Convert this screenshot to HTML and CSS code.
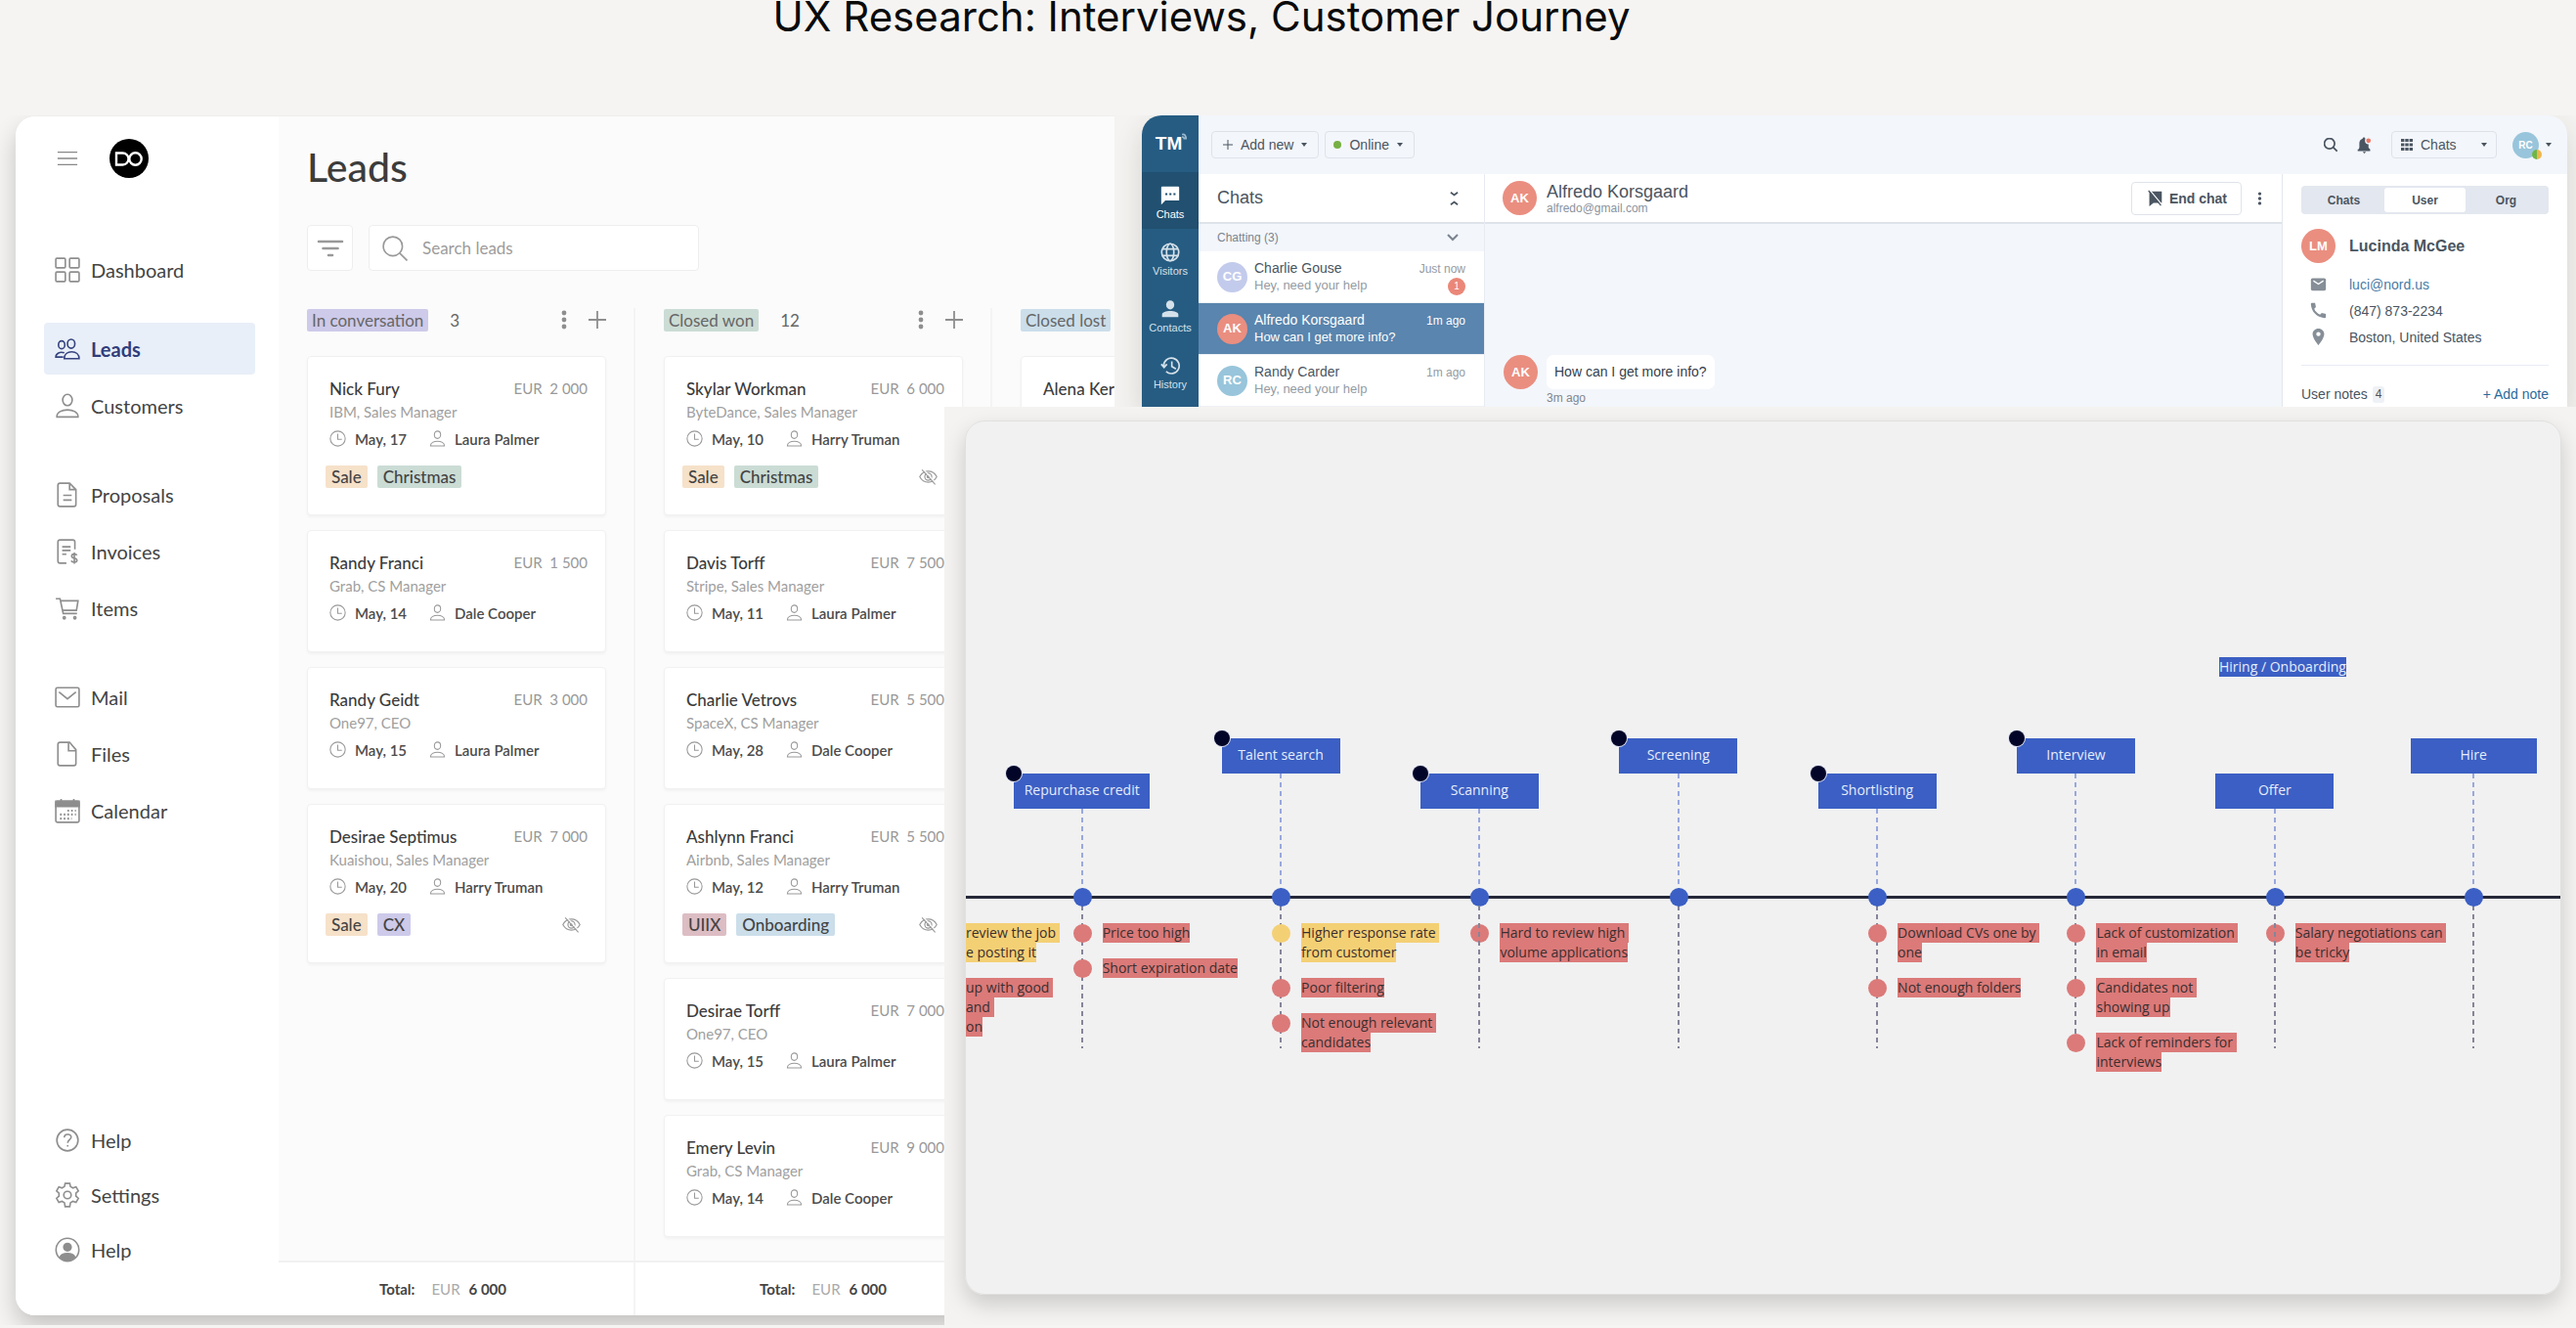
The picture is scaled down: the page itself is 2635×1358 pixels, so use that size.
FILE: index.html
```html
<!DOCTYPE html>
<html lang="en">
<head>
<meta charset="utf-8">
<title>UX Research</title>
<link rel="stylesheet" href="styles.css">
</head>
<body>
<svg class="sprite" aria-hidden="true">
  <symbol id="menu" viewBox="0 0 24 24"><path d="M1 5h22M1 12h22M1 19h22"/></symbol>
  <symbol id="grid" viewBox="0 0 24 24"><rect x="1" y="1" width="9" height="9" rx="1"/><rect x="14" y="1" width="9" height="9" rx="1"/><rect x="1" y="14" width="9" height="9" rx="1"/><rect x="14" y="14" width="9" height="9" rx="1"/></symbol>
  <symbol id="people" viewBox="0 0 24 24"><ellipse cx="15.500" cy="7" rx="3.500" ry="4.200"/><path d="M9 21c0-4 3-6.500 7-6.500s7 2.500 7 6.500z"/><ellipse cx="6.500" cy="8" rx="3" ry="3.700"/><path d="M9 15.500c-4-1.500-8 .5-8 4h7"/></symbol>
  <symbol id="person" viewBox="0 0 24 24"><ellipse cx="12" cy="6.500" rx="4.500" ry="5.300"/><path d="M2 22.500c-.5-9 20.500-9 20 0z"/></symbol>
  <symbol id="doc" viewBox="0 0 24 24"><path d="M5 1h9l6 6v14a2 2 0 0 1-2 2H5a2 2 0 0 1-2-2V3a2 2 0 0 1 2-2zM14 1v6h6M8 12.500h8M8 17h8"/></symbol>
  <symbol id="invoice" viewBox="0 0 24 24"><path d="M11 23H5a2 2 0 0 1-2-2V3a2 2 0 0 1 2-2h12a2 2 0 0 1 2 2v7M7 7.500h8M7 11h8M7 14.500h4M21 15.500c-1-1.500-5-1.500-5 .8 0 2.500 5 1.500 5 4 0 2.200-4.500 2.200-5.500.3M18.500 13v10.500"/></symbol>
  <symbol id="cart" viewBox="0 0 24 24"><path d="M1 3h4l3 14h13M5.500 5H22l-1.500 9H7.500"/><circle cx="9" cy="21" r="1"/><circle cx="19" cy="21" r="1"/></symbol>
  <symbol id="mail" viewBox="0 0 24 24"><rect x="1" y="3" width="22" height="18" rx="1.500"/><path d="M4 7l8 6.500L20 7"/></symbol>
  <symbol id="file" viewBox="0 0 24 24"><path d="M5 1h9l6 7v13a2 2 0 0 1-2 2H5a2 2 0 0 1-2-2V3a2 2 0 0 1 2-2zM13 1v8h7"/></symbol>
  <symbol id="calendar" viewBox="0 0 24 24"><rect x="1" y="3" width="22" height="20" rx="1.500"/><path d="M1 3h22v5H1z" fill="currentColor"/><path d="M6 1v3M18 1v3"/><path d="M12 12h8M5 15.500h15M5 19.500h11" stroke-dasharray="1.500 2" stroke-width="2"/></symbol>
  <symbol id="help" viewBox="0 0 24 24"><circle cx="12" cy="12" r="10"/><path d="M9 9.500c0-4 6.500-4 6.500-.5 0 2.300-3.300 2.500-3.300 5.500M12.200 16.500v1.500"/></symbol>
  <symbol id="gear" viewBox="0 0 24 24"><circle cx="12" cy="12" r="3.500"/><path d="M9.800 1h4.400l.6 3 2.300 1.300 3-1 2.200 3.800-2.300 2.100v2.900l2.300 2.100-2.200 3.800-3-1-2.300 1.300-.6 3.700H9.800l-.6-3.700L6.900 18l-3 1-2.200-3.800L4 13.100v-2.900L1.700 8.100l2.200-3.800 3 1L9.200 4z"/></symbol>
  <symbol id="account" viewBox="0 0 24 24"><circle cx="12" cy="12" r="10.800"/><circle cx="12" cy="9.500" r="3.500" fill="currentColor"/><path d="M5 19c2-4.500 12-4.500 14 0-3 4-11 4-14 0z" fill="currentColor"/></symbol>
  <symbol id="filter" viewBox="0 0 28 24"><path d="M2 5h24M6.500 12h15M12 19h4" stroke-width="2.600" stroke-linecap="round"/></symbol>
  <symbol id="search" viewBox="0 0 24 24"><circle cx="10" cy="10" r="9"/><path d="M16.500 16.500l7 7"/></symbol>
  <symbol id="dots" viewBox="0 0 6 20"><g fill="currentColor" stroke="none"><circle cx="3" cy="3" r="2.400"/><circle cx="3" cy="10" r="2.400"/><circle cx="3" cy="17" r="2.400"/></g></symbol>
  <symbol id="plus" viewBox="0 0 18 18"><path d="M9 0v18M0 9h18" stroke-width="1.800"/></symbol>
  <symbol id="clock" viewBox="0 0 24 24"><circle cx="12" cy="12" r="10.800"/><path d="M12 5v8h6"/></symbol>
  <symbol id="hidden" viewBox="0 0 24 24"><path d="M1 12c5-9.500 17-9.500 22 0-5 9.500-17 9.500-22 0z"/><circle cx="12" cy="12" r="4.500"/><circle cx="12" cy="12" r="1.500"/><path d="M4 3l17 19"/><path d="M5.500 2l17 19" stroke="#fff"/></symbol>
  <symbol id="bubble" viewBox="0 0 24 24"><path fill="currentColor" stroke="none" fill-rule="evenodd" d="M2 1h20a1 1 0 0 1 1 1v16H6l-5 5V2a1 1 0 0 1 1-1zM6 9v2.500h2.500V9zm5 0v2.500h2.500V9zm5 0v2.500h2.500V9z"/></symbol>
  <symbol id="globe" viewBox="0 0 24 24"><circle cx="12" cy="12" r="10.500"/><ellipse cx="12" cy="12" rx="4.500" ry="10.500"/><path d="M2.500 8h19M2.500 16h19"/></symbol>
  <symbol id="contact" viewBox="0 0 24 24"><g fill="currentColor" stroke="none"><ellipse cx="12" cy="7" rx="5" ry="5.500"/><path d="M2 22v-3c0-6 20-6 20 0v3z"/></g></symbol>
  <symbol id="history" viewBox="0 0 24 24"><path d="M4 12a9.500 9.500 0 1 1 3 7M1 10l3.500 4L8 10M14 6.500V13l5 3"/></symbol>
  <symbol id="chevron" viewBox="0 0 12 8"><path d="M1 1l5 5 5-5"/></symbol>
  <symbol id="collapse" viewBox="0 0 10 18"><path d="M1 2l4 3 4-3M1 16l4-3 4 3"/></symbol>
  <symbol id="caret" viewBox="0 0 6 4"><path d="M0 0h6L3 4z" fill="currentColor" stroke="none"/></symbol>
  <symbol id="bell" viewBox="0 0 20 20"><path d="M3 15l1-2V8c0-4 2-5 4-6 0-2 3-2 3 0 3 1 4 3 4 6v5l2 2v2H2v-2z" fill="currentColor" stroke="none"/><path d="M8 18h4l-2 2z" fill="currentColor" stroke="none"/><circle cx="15" cy="4.500" r="3.500" fill="#ec7763" stroke="#f3f6fb"/></symbol>
  <symbol id="apps" viewBox="0 0 12 12"><path d="M0 1.500h12M0 6h12M0 10.500h12" stroke-width="3" stroke-dasharray="3.400 .9"/></symbol>
  <symbol id="endchat" viewBox="0 0 20 20"><path d="M3 2h15v14H8l-5 4z" fill="currentColor" stroke="none"/><path d="M4 1l15 18" stroke="#fff"/><path d="M2 1l15 18"/></symbol>
  <symbol id="envelope" viewBox="0 0 20 20"><rect x="1" y="3" width="18" height="15" rx="2" fill="currentColor" stroke="none"/><path d="M4 6l6 4 6-4" stroke="#fff"/></symbol>
  <symbol id="phone" viewBox="0 0 20 20"><path d="M2 1h4l1 5-2 2c1 3 4 6 7 7l2-2 5 1v4c0 1-1 1-2 1C8 18 2 12 1 3c0-1 0-2 1-2z" fill="currentColor" stroke="none"/></symbol>
  <symbol id="pin" viewBox="0 0 20 20"><path d="M10 0c4 0 7 3 7 6.500C17 12 10 20 10 20S3 12 3 6.500C3 3 6 0 10 0zm0 4a2.600 2.600 0 1 0 0 5.200A2.600 2.600 0 0 0 10 4z" fill="currentColor" fill-rule="evenodd" stroke="none"/></symbol>
</svg>

<h1 class="headline">UX Research: Interviews, Customer Journey</h1>

<main class="stage">
  <section class="leads">
    <nav class="side">
      <div class="side-top">
        <button class="bare" aria-label="Menu"><svg class="i22"><use href="#menu"/></svg></button>
        <svg class="logo" viewBox="0 0 40 40" role="img" aria-label="DO"><circle cx="20" cy="20" r="20" fill="#000"/><g fill="none" stroke="#fff" stroke-width="2.400"><path d="M7 14.500h6.500a6 6 0 0 1 0 12H7z"/><circle cx="26.500" cy="20.500" r="6.200"/></g></svg>
      </div>
      <a class="nav" href="#"><svg class="i26"><use href="#grid"/></svg>Dashboard</a>
      <div class="nav-group nav-near">
        <a class="nav nav-on" href="#"><svg class="i26"><use href="#people"/></svg>Leads</a>
        <a class="nav" href="#"><svg class="i26"><use href="#person"/></svg>Customers</a>
      </div>
      <div class="nav-group">
        <a class="nav" href="#"><svg class="i26"><use href="#doc"/></svg>Proposals</a>
        <a class="nav" href="#"><svg class="i26"><use href="#invoice"/></svg>Invoices</a>
        <a class="nav" href="#"><svg class="i26"><use href="#cart"/></svg>Items</a>
      </div>
      <div class="nav-group">
        <a class="nav" href="#"><svg class="i26"><use href="#mail"/></svg>Mail</a>
        <a class="nav" href="#"><svg class="i26"><use href="#file"/></svg>Files</a>
        <a class="nav" href="#"><svg class="i26"><use href="#calendar"/></svg>Calendar</a>
      </div>
      <div class="nav-group nav-foot">
        <a class="nav" href="#"><svg class="i26"><use href="#help"/></svg>Help</a>
        <a class="nav" href="#"><svg class="i26"><use href="#gear"/></svg>Settings</a>
        <a class="nav" href="#"><svg class="i26"><use href="#account"/></svg>Help</a>
      </div>
    </nav>

    <div class="board">
      <h2 class="board-title">Leads</h2>
      <div class="tools">
        <button class="tool" aria-label="Filter"><svg class="filter"><use href="#filter"/></svg></button>
        <label class="search"><svg class="i26"><use href="#search"/></svg><input type="search" placeholder="Search leads" aria-label="Search leads"></label>
      </div>
      <div class="columns">
        <section class="col">
          <header class="col-head"><span class="tag lilac">In conversation</span><span class="count">3</span>
            <button class="bare" aria-label="More"><svg class="dots"><use href="#dots"/></svg></button><button class="bare" aria-label="Add"><svg class="plus"><use href="#plus"/></svg></button></header>
          <article class="card">
            <div class="row"><h3>Nick Fury</h3><span class="sum">EUR&nbsp; 2 000</span></div>
            <p class="role">IBM, Sales Manager</p>
            <div class="meta"><svg class="i17"><use href="#clock"/></svg><span class="date">May, 17</span><svg class="i17"><use href="#person"/></svg><span>Laura Palmer</span></div>
            <div class="tags"><span class="tag peach">Sale</span><span class="tag mint">Christmas</span></div>
          </article>
          <article class="card">
            <div class="row"><h3>Randy Franci</h3><span class="sum">EUR&nbsp; 1 500</span></div>
            <p class="role">Grab, CS Manager</p>
            <div class="meta"><svg class="i17"><use href="#clock"/></svg><span class="date">May, 14</span><svg class="i17"><use href="#person"/></svg><span>Dale Cooper</span></div>
          </article>
          <article class="card">
            <div class="row"><h3>Randy Geidt</h3><span class="sum">EUR&nbsp; 3 000</span></div>
            <p class="role">One97, CEO</p>
            <div class="meta"><svg class="i17"><use href="#clock"/></svg><span class="date">May, 15</span><svg class="i17"><use href="#person"/></svg><span>Laura Palmer</span></div>
          </article>
          <article class="card">
            <div class="row"><h3>Desirae Septimus</h3><span class="sum">EUR&nbsp; 7 000</span></div>
            <p class="role">Kuaishou, Sales Manager</p>
            <div class="meta"><svg class="i17"><use href="#clock"/></svg><span class="date">May, 20</span><svg class="i17"><use href="#person"/></svg><span>Harry Truman</span></div>
            <div class="tags"><span class="tag peach">Sale</span><span class="tag lilac">CX</span><svg class="eye"><use href="#hidden"/></svg></div>
          </article>
        </section>
        <section class="col">
          <header class="col-head"><span class="tag mint">Closed won</span><span class="count">12</span>
            <button class="bare" aria-label="More"><svg class="dots"><use href="#dots"/></svg></button><button class="bare" aria-label="Add"><svg class="plus"><use href="#plus"/></svg></button></header>
          <article class="card">
            <div class="row"><h3>Skylar Workman</h3><span class="sum">EUR&nbsp; 6 000</span></div>
            <p class="role">ByteDance, Sales Manager</p>
            <div class="meta"><svg class="i17"><use href="#clock"/></svg><span class="date">May, 10</span><svg class="i17"><use href="#person"/></svg><span>Harry Truman</span></div>
            <div class="tags"><span class="tag peach">Sale</span><span class="tag mint">Christmas</span><svg class="eye"><use href="#hidden"/></svg></div>
          </article>
          <article class="card">
            <div class="row"><h3>Davis Torff</h3><span class="sum">EUR&nbsp; 7 500</span></div>
            <p class="role">Stripe, Sales Manager</p>
            <div class="meta"><svg class="i17"><use href="#clock"/></svg><span class="date">May, 11</span><svg class="i17"><use href="#person"/></svg><span>Laura Palmer</span></div>
          </article>
          <article class="card">
            <div class="row"><h3>Charlie Vetrovs</h3><span class="sum">EUR&nbsp; 5 500</span></div>
            <p class="role">SpaceX, CS Manager</p>
            <div class="meta"><svg class="i17"><use href="#clock"/></svg><span class="date">May, 28</span><svg class="i17"><use href="#person"/></svg><span>Dale Cooper</span></div>
          </article>
          <article class="card">
            <div class="row"><h3>Ashlynn Franci</h3><span class="sum">EUR&nbsp; 5 500</span></div>
            <p class="role">Airbnb, Sales Manager</p>
            <div class="meta"><svg class="i17"><use href="#clock"/></svg><span class="date">May, 12</span><svg class="i17"><use href="#person"/></svg><span>Harry Truman</span></div>
            <div class="tags"><span class="tag rose">UIIX</span><span class="tag sky">Onboarding</span><svg class="eye"><use href="#hidden"/></svg></div>
          </article>
          <article class="card">
            <div class="row"><h3>Desirae Torff</h3><span class="sum">EUR&nbsp; 7 000</span></div>
            <p class="role">One97, CEO</p>
            <div class="meta"><svg class="i17"><use href="#clock"/></svg><span class="date">May, 15</span><svg class="i17"><use href="#person"/></svg><span>Laura Palmer</span></div>
          </article>
          <article class="card">
            <div class="row"><h3>Emery Levin</h3><span class="sum">EUR&nbsp; 9 000</span></div>
            <p class="role">Grab, CS Manager</p>
            <div class="meta"><svg class="i17"><use href="#clock"/></svg><span class="date">May, 14</span><svg class="i17"><use href="#person"/></svg><span>Dale Cooper</span></div>
          </article>
        </section>
        <section class="col">
          <header class="col-head"><span class="tag sky">Closed lost</span></header>
          <article class="card"><div class="row"><h3>Alena Ker</h3></div></article>
        </section>
      </div>
      <footer class="totals">
        <div class="total"><b>Total:</b><span>EUR</span><b>6 000</b></div>
        <div class="total total-wide"><b>Total:</b><span>EUR</span><b>6 000</b></div>
      </footer>
    </div>
  </section>

  <section class="chat-area">
    <div class="chat">
      <nav class="rail">
        <div class="brand">TM<svg class="brand-arc" viewBox="0 0 6 8"><path d="M0 1c3-1 5 1 5 6M0 4c2 0 3 1 3 3" fill="none" stroke="#9db9cc"/></svg></div>
        <a class="rail-on" href="#"><svg class="i20"><use href="#bubble"/></svg>Chats</a>
        <a href="#"><svg class="i20"><use href="#globe"/></svg>Visitors</a>
        <a href="#"><svg class="i20"><use href="#contact"/></svg>Contacts</a>
        <a href="#"><svg class="i20"><use href="#history"/></svg>History</a>
      </nav>
      <div class="chat-body">
        <header class="topbar">
          <button class="pill"><svg class="i10"><use href="#plus"/></svg>Add new<svg class="caret"><use href="#caret"/></svg></button>
          <button class="pill"><i class="status"></i>Online<svg class="caret"><use href="#caret"/></svg></button>
          <div class="top-right">
            <button class="bare" aria-label="Search"><svg class="i14 bold"><use href="#search"/></svg></button>
            <button class="bare" aria-label="Notifications"><svg class="i17"><use href="#bell"/></svg></button>
            <label class="pill pick"><svg class="i12"><use href="#apps"/></svg><select aria-label="Section"><option>Chats</option></select><svg class="caret"><use href="#caret"/></svg></label>
            <button class="bare me" aria-label="Account"><span class="avatar a27 blue">RC<i></i></span><svg class="caret"><use href="#caret"/></svg></button>
          </div>
        </header>
        <div class="panes">
          <section class="list">
            <header class="list-head"><h2>Chats</h2><svg class="collapse"><use href="#collapse"/></svg></header>
            <div class="list-sub"><span>Chatting (3)</span><svg class="chevron"><use href="#chevron"/></svg></div>
            <article class="thread"><span class="avatar a31 violet">CG</span><div><h3>Charlie Gouse</h3><p>Hey, need your help</p></div><div class="when">Just now<span class="unread">1</span></div></article>
            <article class="thread thread-on"><span class="avatar a31">AK</span><div><h3>Alfredo Korsgaard</h3><p>How can I get more info?</p></div><div class="when">1m ago</div></article>
            <article class="thread"><span class="avatar a31 blue">RC</span><div><h3>Randy Carder</h3><p>Hey, need your help</p></div><div class="when">1m ago</div></article>
          </section>
          <section class="talk">
            <header class="talk-head"><span class="avatar a35">AK</span><div><h2>Alfredo Korsgaard</h2><p>alfredo@gmail.com</p></div>
              <button class="end"><svg class="i17"><use href="#endchat"/></svg>End chat</button><button class="bare" aria-label="More"><svg class="kebab"><use href="#dots"/></svg></button></header>
            <div class="message"><span class="avatar a35">AK</span><p class="bubble">How can I get more info?</p><time>3m ago</time></div>
          </section>
          <aside class="info">
            <div class="tabs"><button>Chats</button><button class="tab-on">User</button><button>Org</button></div>
            <div class="who"><span class="avatar a35">LM</span><h2>Lucinda McGee</h2></div>
            <ul class="facts">
              <li><svg class="i17"><use href="#envelope"/></svg><a href="#">luci@nord.us</a></li>
              <li><svg class="i17"><use href="#phone"/></svg>(847) 873-2234</li>
              <li><svg class="i17"><use href="#pin"/></svg>Boston, United States</li>
            </ul>
            <div class="notes-head">User notes<span class="num">4</span><a href="#">+ Add note</a></div>
          </aside>
        </div>
      </div>
    </div>
  </section>

  <section class="journey-area">
    <div class="journey">
      <div class="axis"></div>
      <span class="phase">Hiring / Onboarding</span>
      <div class="cut">
        <p class="note gold"><span>review the job </span><span>e posting it</span></p>
        <p class="note"><span>up with good </span><span>and </span><span>on</span></p>
      </div>
      <div class="steps">
        <section class="step low">
          <div class="upper"><h3 class="label label-wide marked">Repurchase credit</h3><i class="link"></i></div>
          <div class="lower"><i class="node"></i>
            <p class="note"><span>Price too high</span></p><p class="note"><span>Short expiration date</span></p></div>
        </section>
        <section class="step">
          <div class="upper"><h3 class="label marked">Talent search</h3><i class="link"></i></div>
          <div class="lower"><i class="node"></i>
            <p class="note gold"><span>Higher response rate </span><span>from customer</span></p><p class="note"><span>Poor filtering</span></p><p class="note"><span>Not enough relevant </span><span>candidates</span></p></div>
        </section>
        <section class="step low">
          <div class="upper"><h3 class="label marked">Scanning</h3><i class="link"></i></div>
          <div class="lower over"><i class="node"></i>
            <p class="note"><span>Hard to review high </span><span>volume applications</span></p></div>
        </section>
        <section class="step">
          <div class="upper"><h3 class="label marked">Screening</h3><i class="link"></i></div>
          <div class="lower"><i class="node"></i></div>
        </section>
        <section class="step low">
          <div class="upper"><h3 class="label marked">Shortlisting</h3><i class="link"></i></div>
          <div class="lower"><i class="node"></i>
            <p class="note"><span>Download CVs one by </span><span>one</span></p><p class="note"><span>Not enough folders</span></p></div>
        </section>
        <section class="step">
          <div class="upper"><h3 class="label marked">Interview</h3><i class="link"></i></div>
          <div class="lower"><i class="node"></i>
            <p class="note"><span>Lack of customization </span><span>in email</span></p><p class="note"><span>Candidates not </span><span>showing up</span></p><p class="note"><span>Lack of reminders for </span><span>interviews</span></p></div>
        </section>
        <section class="step low">
          <div class="upper"><h3 class="label">Offer</h3><i class="link"></i></div>
          <div class="lower over"><i class="node"></i>
            <p class="note"><span>Salary negotiations can </span><span>be tricky</span></p></div>
        </section>
        <section class="step">
          <div class="upper"><h3 class="label label-mid">Hire</h3><i class="link"></i></div>
          <div class="lower"><i class="node"></i></div>
        </section>
      </div>
    </div>
  </section>
</main>
</body>
</html>
```
FILE: styles.css
```css
* { box-sizing: border-box; }
h1, h2, h3, p, ul { margin: 0; padding: 0; font-weight: inherit; font-size: inherit; }
body { margin: 0; background: #f5f4f2; overflow-x: hidden; }
a { color: inherit; text-decoration: none; }
button, input, select { font: inherit; color: inherit; }
svg { display: block; flex: none; fill: none; stroke: currentColor; stroke-width: 1.5; }
.sprite { position: absolute; width: 0; height: 0; }
.bare { border: 0; padding: 0; background: none; display: flex; align-items: center; }
.i10 { width: 10px; height: 10px; }
.i12 { width: 12px; height: 12px; }
.i14 { width: 14px; height: 14px; }
.i17 { width: 17px; height: 17px; }
.i20 { width: 20px; height: 20px; }
.i22 { width: 22px; height: 22px; }
.i26 { width: 26px; height: 26px; }
.bold { stroke-width: 3; }

.headline { height: 118px; padding-left: 30%; font: 400 42px/34px Inter, sans-serif; color: #0a0a0a; white-space: nowrap; }
.stage {
  display: grid;
  grid-template-columns: minmax(0, 966fr) minmax(0, 174fr) minmax(0, 1495fr);
  grid-template-rows: auto 1fr;
  margin-bottom: 2px;
  overflow: hidden;
}

/* Leads window */
.leads {
  grid-area: 1 / 1 / 3 / 3;
  display: flex;
  margin: 1px 0 10px 16px;
  border-radius: 20px 0 0 20px;
  overflow: hidden;
  background: #fbfbfb;
  box-shadow: 0 12px 24px rgba(0, 0, 0, .2);
  font-family: Lato, sans-serif;
  color: #444;
}
.side { flex: none; width: 269px; padding: 23px 24px 41px 29px; background: #fff; display: flex; flex-direction: column; }
.side-top { display: flex; align-items: center; gap: 32px; height: 40px; margin-bottom: 67px; padding-left: 13px; color: #888; }
.logo { width: 40px; height: 40px; stroke: none; }
.nav { display: flex; align-items: center; gap: 11px; height: 53px; padding-left: 11px; border-radius: 4px; font-size: 20px; line-height: 22px; }
.nav svg { color: #8e8e8e; }
.nav-on { background: #e8eff8; color: #2f3d7c; font-weight: 700; }
.nav-on svg { color: #35437f; }
.nav-group { display: flex; flex-direction: column; gap: 5px; margin-top: 38px; }
.nav-near { margin-top: 28px; }
.nav-foot { margin-top: auto; gap: 3px; }

.board { flex: 1; min-width: 0; display: flex; flex-direction: column; }
.board-title { padding: 28px 0 0 29px; font-size: 41px; line-height: 48px; font-weight: 500; color: #3c3c3c; }
.tools { display: flex; gap: 16px; padding: 35px 0 0 29px; }
.tool, .search { height: 47px; border: 1px solid #eee; border-radius: 4px; background: #fff; display: flex; align-items: center; }
.tool { width: 47px; padding: 0; justify-content: center; color: #999; }
.filter { width: 28px; height: 24px; }
.search { width: 338px; padding: 0 13px; gap: 15px; color: #999; }
.search input { flex: 1; min-width: 0; border: 0; outline: 0; padding: 0; background: none; font-size: 17px; }
.search input::placeholder { color: #9c9c9c; opacity: 1; }
.columns { flex: 1; display: flex; padding-top: 38px; }
.col { flex: none; width: 365px; padding: 0 28px 24px 29px; border-right: 2px solid #f4f4f4; display: flex; flex-direction: column; gap: 15px; }
.col:last-child { border: 0; }
.col-head { display: flex; align-items: center; height: 24px; margin-bottom: 10px; font-size: 17px; color: #666; }
.col-head .bare { color: #8e8e8e; }
.count { margin: 0 auto 0 22px; }
.dots { width: 6px; height: 20px; margin-right: 22px; }
.plus { width: 18px; height: 18px; }
.tag { padding: 0 5px; border-radius: 2px; font-size: 17px; line-height: 23px; white-space: nowrap; }
.lilac { background: #cdcaea; }
.mint { background: #cbdcd5; }
.peach { background: #f6e1c9; }
.rose { background: #dcbdc3; }
.sky { background: #cbdeea; }
.card { padding: 20px 18px 27px 22px; border: 1px solid #f1f1f1; border-radius: 4px; background: #fff; box-shadow: 0 2px 3px rgba(0, 0, 0, .04); }
.row { display: flex; justify-content: space-between; align-items: center; height: 24px; white-space: nowrap; }
.row h3 { font-size: 17px; font-weight: 500; color: #3c3c3c; }
.sum { font-size: 15px; color: #999; }
.role { font-size: 15px; line-height: 24px; color: #a0a0a0; }
.meta { display: flex; align-items: center; height: 25px; margin-top: 3px; gap: 9px; font-size: 15px; font-weight: 600; color: #4c4c4c; white-space: nowrap; }
.meta svg { color: #999; }
.date { width: 67px; }
.tags { display: flex; align-items: center; gap: 10px; height: 23px; margin: 15px 0 0 -4px; }
.tags .tag { padding: 0 6px; font-weight: 500; }
.eye { width: 19px; height: 19px; margin: 0 7px 0 auto; color: #999; }
.totals { display: flex; height: 56px; border-top: 2px solid #f1f1f1; background: #fff; }
.total { flex: none; width: 365px; display: flex; align-items: center; gap: 9px; padding-left: 103px; border-right: 2px solid #f4f4f4; font-size: 15px; }
.total span { margin-left: 8px; color: #aaa; }
.total-wide { padding-left: 127px; }

/* Chat window */
.chat-area { grid-area: 1 / 3; padding: 0 9px 0 28px; background: #f4f3f1; overflow: hidden; }
.chat {
  display: flex;
  height: 100%;
  border-radius: 20px 20px 0 0;
  overflow: hidden;
  background: #f3f6fb;
  box-shadow: 0 12px 28px rgba(60, 50, 40, .16);
  font-family: "Liberation Sans", Arial, sans-serif;
  font-size: 14px;
  color: #4a5561;
}
.rail { flex: none; width: 58px; background: #265c82; color: #d5e1ea; display: flex; flex-direction: column; }
.brand { height: 58px; display: flex; justify-content: center; align-items: center; padding-left: 2px; font-size: 19px; font-weight: 700; color: #fff; }
.brand-arc { width: 5px; height: 8px; margin-bottom: 14px; }
.rail a { height: 58px; padding-top: 14px; display: flex; flex-direction: column; align-items: center; gap: 3px; font-size: 11px; line-height: 12px; }
.rail svg { stroke-width: 2; }
.rail .rail-on { background: #215070; color: #fff; }
.chat-body { flex: 1; min-width: 0; display: flex; flex-direction: column; }
.topbar { display: flex; align-items: center; gap: 6px; height: 60px; padding: 0 16px 0 13px; }
.pill { display: flex; align-items: center; gap: 8px; height: 28px; padding: 0 11px; border: 1px solid #dfe3e9; border-radius: 4px; background: none; white-space: nowrap; }
.caret { width: 6px; height: 4px; }
.status { width: 8px; height: 8px; margin-left: -3px; border-radius: 50%; background: #76b043; }
.top-right { display: flex; align-items: center; gap: 19px; margin-left: auto; }
.pick { width: 108px; padding: 0 9px; }
.pick select { flex: 1; min-width: 0; border: 0; padding: 0; background: none; appearance: none; }
.me { gap: 7px; margin-left: -3px; }
.me .avatar { position: relative; font-size: 10px; }
.me i { position: absolute; right: -3px; bottom: -1px; width: 10px; height: 10px; border-radius: 50%; background: linear-gradient(90deg, #6fb648 50%, #f0b64c 50%); }
.avatar { flex: none; display: flex; align-items: center; justify-content: center; border-radius: 50%; background: #ea8e80; color: #fff; font-size: 13px; font-weight: 700; }
.blue { background: #98c5db; }
.violet { background: #c3cbec; }
.a27 { width: 27px; height: 27px; }
.a31 { width: 31px; height: 31px; }
.a35 { width: 35px; height: 35px; }
.panes { flex: 1; display: flex; }
.list { flex: none; width: 293px; border-right: 1px solid #e8ecf2; }
.list-head { display: flex; align-items: center; justify-content: space-between; height: 51px; padding: 0 26px 0 19px; border-bottom: 2px solid #dfe3ea; background: #fff; font-size: 18px; }
.collapse { width: 9px; height: 16px; stroke-width: 2; }
.list-sub { display: flex; align-items: center; justify-content: space-between; height: 28px; padding: 0 26px 0 19px; font-size: 12px; color: #7a848f; }
.chevron { width: 12px; height: 8px; stroke-width: 2; }
.thread { display: flex; align-items: center; gap: 7px; height: 53px; padding: 0 19px; background: #fff; line-height: 18px; border-bottom: 1px solid #eef1f5; }
.thread p { font-size: 13px; color: #949ba3; }
.when { align-self: flex-start; padding-top: 9px; margin-left: auto; font-size: 12px; color: #949ba3; }
.unread { display: block; width: 18px; height: 18px; margin-left: auto; border-radius: 50%; background: #ea8778; color: #fff; font-size: 10px; text-align: center; }
.thread-on, .thread-on p, .thread-on .when { background: #5985ae; color: #fff; }
.talk { flex: 1; min-width: 0; display: flex; flex-direction: column; }
.talk-head { display: flex; align-items: center; gap: 10px; height: 51px; padding: 0 20px 0 18px; border-bottom: 2px solid #dfe3ea; background: #fff; }
.talk-head h2 { font-size: 18px; line-height: 20px; }
.talk-head p { font-size: 12px; line-height: 14px; color: #8a939d; }
.end { display: flex; align-items: center; gap: 6px; height: 34px; margin: 0 6px 0 auto; padding: 0 14px 0 15px; border: 1px solid #dfe3ea; border-radius: 4px; background: #fff; font-weight: 700; }
.kebab { width: 5px; height: 14px; }
.message { display: grid; grid-template-columns: 35px max-content; column-gap: 9px; margin-top: auto; padding: 0 0 0 19px; }
.bubble { padding: 0 8px; border-radius: 7px; background: #fff; line-height: 34px; color: #33414e; }
.message time { grid-column: 2; font-size: 12px; line-height: 18px; color: #7d8791; }
.info { flex: none; width: 292px; padding: 12px 19px 0; border-left: 1px solid #e3e7ed; background: #fff; }
.tabs { display: flex; height: 29px; padding: 2px; border-radius: 4px; background: #e3e7ef; }
.tabs button { flex: 1; border: 0; padding: 0; border-radius: 3px; background: none; font-size: 12px; font-weight: 700; }
.tabs .tab-on { background: #fff; }
.who { display: flex; align-items: center; gap: 14px; margin-top: 15px; font-size: 16px; font-weight: 700; }
.facts { list-style: none; margin-top: 8px; padding-bottom: 15px; border-bottom: 1px solid #e8edf3; }
.facts li { display: flex; align-items: center; gap: 23px; height: 27px; padding-left: 9px; }
.facts svg { color: #868e97; }
.facts a { color: #4a7ba6; }
.notes-head { display: flex; align-items: center; height: 26px; margin-top: 16px; }
.num { margin-left: 5px; padding: 0 3px; border-radius: 3px; background: #eef1f5; font-size: 12px; line-height: 17px; }
.notes-head a { margin-left: auto; color: #2b6a9c; }

/* Customer journey */
.journey-area { grid-area: 2 / 2 / 3 / 4; position: relative; padding: 14px 15px 31px 21px; background: #f4f3f1; overflow: hidden; }
.journey {
  position: relative;
  height: 100%;
  border: 1px solid #e0e0df;
  border-radius: 20px;
  overflow: hidden;
  background: #f1f1f1;
  font: 14px/20px "Open Sans", sans-serif;
  color: #3a2f30;
}
.journey-area::before { content: ""; position: absolute; inset: 14px 15px 31px 21px; border-radius: 20px; box-shadow: 0 10px 22px rgba(0, 0, 0, .17); }
.axis { position: absolute; left: 0; right: 0; top: 485px; height: 3px; background: #262938; }
.phase { position: absolute; left: 78.6%; top: 241px; background: #3b5fc4; color: #e7ecfa; }
.cut { position: absolute; left: 0; top: 513px; }
.steps { display: grid; grid-template-columns: repeat(8, 12.6%); margin-left: 17px; }
.upper { height: 486px; display: flex; flex-direction: column; align-items: center; justify-content: flex-end; }
.label { position: relative; min-width: 121px; height: 36px; background: #3b5fc4; color: #e7ecfa; line-height: 34px; text-align: center; white-space: nowrap; }
.label-mid { min-width: 129px; }
.label-wide { min-width: 139px; }
.marked::before { content: ""; position: absolute; left: -8px; top: -8px; width: 16px; height: 16px; border-radius: 50%; background: #020527; box-shadow: 0 0 0 1px #dfe3f2; }
.link, .lower::before { width: 2px; background: repeating-linear-gradient(#9aa8dd 0 5px, transparent 5px 9px); }
.link { height: 126px; }
.low .link { height: 90px; }
.lower { position: relative; padding: 27px 0 0 50%; }
.lower::before { content: ""; position: absolute; left: 50%; top: 9px; height: 146px; margin-left: -1px; background: repeating-linear-gradient(#85859a 0 5px, transparent 5px 9px); }
.over::before { z-index: 1; }
.node { position: absolute; left: 50%; top: -9px; width: 19px; height: 19px; margin-left: -9px; border-radius: 50%; background: #3b5fc4; }
.note { position: relative; margin: 0 0 16px 21px; }
.cut .note { margin-left: 0; }
.note span { display: block; width: max-content; background: #db7a79; white-space: pre; }
.gold span { background: #f4d075; }
.lower .note::before { content: ""; position: absolute; left: -30px; top: 1px; width: 19px; height: 19px; border-radius: 50%; background: #db7a79; }
.lower .gold::before { background: #f4d075; }
```
